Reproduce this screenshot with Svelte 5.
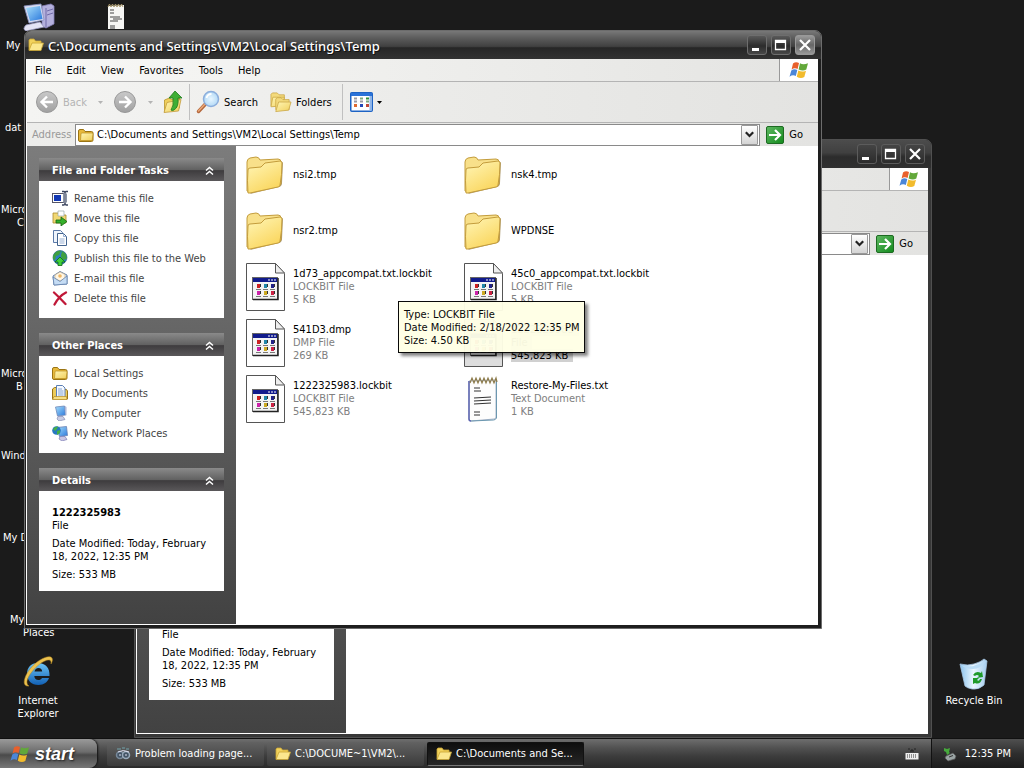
<script lang="ts">
  type Entry = {
    name: string;
    kind: 'folder' | 'app' | 'text';
    type?: string;
    size?: string;
    selected?: boolean;
  };

  const PATH = 'C:\\Documents and Settings\\VM2\\Local Settings\\Temp';

  const MENUS = ['File', 'Edit', 'View', 'Favorites', 'Tools', 'Help'];

  const TASKS = [
    { icon: 'rename', label: 'Rename this file' },
    { icon: 'move', label: 'Move this file' },
    { icon: 'copy', label: 'Copy this file' },
    { icon: 'publish', label: 'Publish this file to the Web' },
    { icon: 'mail', label: 'E-mail this file' },
    { icon: 'delete', label: 'Delete this file' },
  ];

  const PLACES = [
    { icon: 'folder', label: 'Local Settings' },
    { icon: 'documents', label: 'My Documents' },
    { icon: 'computer', label: 'My Computer' },
    { icon: 'network', label: 'My Network Places' },
  ];

  const FILES: Entry[] = [
    { name: 'nsi2.tmp', kind: 'folder' },
    { name: 'nsk4.tmp', kind: 'folder' },
    { name: 'nsr2.tmp', kind: 'folder' },
    { name: 'WPDNSE', kind: 'folder' },
    { name: '1d73_appcompat.txt.lockbit', kind: 'app', type: 'LOCKBIT File', size: '5 KB' },
    { name: '45c0_appcompat.txt.lockbit', kind: 'app', type: 'LOCKBIT File', size: '5 KB' },
    { name: '541D3.dmp', kind: 'app', type: 'DMP File', size: '269 KB' },
    { name: '1222325983', kind: 'app', type: 'File', size: '545,823 KB', selected: true },
    { name: '1222325983.lockbit', kind: 'app', type: 'LOCKBIT File', size: '545,823 KB' },
    { name: 'Restore-My-Files.txt', kind: 'text', type: 'Text Document', size: '1 KB' },
  ];

  // labels that stick out from behind the windows
  const LABELS = [
    { x: 6, y: 39, text: 'My' },
    { x: 5, y: 121, text: 'dat' },
    { x: 1, y: 203, text: 'Micro' },
    { x: 17, y: 216, text: 'C' },
    { x: 1, y: 367, text: 'Micro' },
    { x: 16, y: 380, text: 'B' },
    { x: 1, y: 449, text: 'Wind' },
    { x: 3, y: 531, text: 'My D' },
    { x: 10, y: 613, text: 'My' },
    { x: 23, y: 626, text: 'Places' },
  ];

  const DOTS = ['#c22', '#28a', '#228', '#c2a', '#ca2', '#c24'];
</script>

{#snippet flag(size: number)}
  <svg width={size} height={size} viewBox="0 0 20 20" aria-hidden="true">
    <path d="M4 3.500c2-1.800 4-1.600 6-.6L8.600 9c-2-1-4-1-6 .5z" fill="#e8602c" />
    <path d="M11 3.300c2 1.200 4.500 1.500 8 0L17.300 9.600c-2.500 1.400-5 1.200-7.700-.2z" fill="#62a83a" />
    <path d="M2.300 10.600c2-1.600 4-1.500 6-.5L6.800 16c-2-1-4-.9-6.300.7z" fill="#4b86d8" />
    <path d="M9.300 10.500c2.500 1.400 5 1.500 7.700.2L15.300 17c-2.500 1.400-5 1.100-7.500-.3z" fill="#f2bb2c" />
  </svg>
{/snippet}

{#snippet smallFolder()}
  <svg width="16" height="16" viewBox="0 0 16 16" aria-hidden="true">
    <path d="M.5 13V4q0-1.500 1.500-1.500h3.500l1.500 2h6.500q1.500 0 1.500 1.500v7q0 1.500-1.500 1.500H2Q.5 14.500.5 13z" fill="#e7b93c" stroke="#9a7414" />
    <path d="M2.500 13.500l.5-6.500q0-1 1-1h10q1 0 1 1l-.8 6.500z" fill="url(#gold)" stroke="#b78d20" stroke-width=".7" />
  </svg>
{/snippet}

{#snippet openFolder()}
  <svg width="16" height="16" viewBox="0 0 16 16" aria-hidden="true">
    <path d="M1 13V3l1-1h4l1.500 2H13v3" fill="#f2d25c" stroke="#c9a434" stroke-width=".8" />
    <path d="M1 13.500L4 6h11.500L13 13.500z" fill="#fbe78e" stroke="#c9a434" stroke-width=".8" />
  </svg>
{/snippet}

{#snippet notepad()}
  <svg width="39" height="48" viewBox="0 0 39 48" aria-hidden="true">
    <path d="M5 6l27-1v37q0 2-2 2L7 46q-2 0-2-2z" fill="#fdfdfd" stroke="#a9b4c8" />
    <path d="M5 6v38q0 2 2 2" fill="none" stroke="#5b63b0" stroke-width="1.500" />
    <path d="M32.500 6v37q-1 2-3 2L7 46" fill="none" stroke="#6c98b0" />
    <path d="M6 8l2-5 2 5 2-5 2 5 2-5 2 5 2-5 2 5 2-5 2 5 2-5 2 5 2-5 1 4" fill="none" stroke="#8c7a4a" stroke-width="1.200" />
    <path d="M10 13h6M10 16h7M10 23l17-1M10 26l17-1M10 29l17-1M10 37h6M10 40h6" stroke="#333" stroke-width="1.200" />
  </svg>
{/snippet}

{#snippet sideIcon(name: string)}
  {#if name === 'folder'}
    {@render smallFolder()}
  {:else}
    <svg width="16" height="16" viewBox="0 0 16 16" aria-hidden="true">
      {#if name === 'rename'}
        <rect x=".5" y="3.500" width="11" height="9" fill="#fff" stroke="#556" />
        <rect x="2" y="5" width="7" height="6" fill="#1238b4" />
        <path d="M10 1.500h2l1 1 1-1h2M13 2.500v11M10 15h2l1-1.500 1 1.500h2" fill="none" stroke="#3c4660" stroke-width="1.300" />
        <path d="M11.500 3.500v9M14.500 3.500v9" stroke="#8a94a6" />
      {:else if name === 'move'}
        <path d="M1 13V3h5l1 2h7v8z" fill="#f1d873" stroke="#a98b2c" stroke-width=".8" />
        <path d="M6 1h6v5H6z" fill="#fff" stroke="#9aa" stroke-width=".7" />
        <path d="M4 10h5V7l6 4.500L9 16v-3H4z" fill="#35b02c" stroke="#14640f" stroke-width=".8" />
      {:else if name === 'copy'}
        <path d="M1.500.500h7l2 2v10h-9z" fill="#eef4fc" stroke="#5a79a8" />
        <path d="M5.500 3.500h6l3 3v9h-9z" fill="#fff" stroke="#43648f" />
        <path d="M11.500 3.500v3h3M7.500 9h5M7.500 11h5M7.500 13h5" fill="none" stroke="#7e9cc8" stroke-width=".8" />
      {:else if name === 'publish'}
        <circle cx="8" cy="7.500" r="7" fill="#2e7fc0" stroke="#1c5a78" stroke-width=".6" />
        <path d="M1 6q3-6 8-5l-2 4-3 1-1 4-2-1zM10 1l4 3 .8 5-4 1-2-4z" fill="#3fa040" />
        <path d="M8 7l5 5h-3v3.500H6V12H3z" fill="#3fd03a" stroke="#0f6a14" stroke-width=".8" />
      {:else if name === 'mail'}
        <path d="M1 6l7-4.500L15 5v9L2 15z" fill="#d8e6f7" stroke="#6583ad" />
        <path d="M3 5l5-3 5 2.500v4L8 11 3 8.500z" fill="#fff6e4" stroke="#c2a77a" stroke-width=".6" />
        <circle cx="8" cy="6" r="1.800" fill="#f0b765" />
        <path d="M1 7l7 4.500L15 6v8L2 15z" fill="#c5dcf4" stroke="#6583ad" stroke-width=".8" />
      {:else if name === 'delete'}
        <path d="M2 2.500Q7 7 13.500 14M14 2.500Q7 6 2.500 14.500" fill="none" stroke="#c01838" stroke-width="2.300" stroke-linecap="round" />
      {:else if name === 'documents'}
        <path d="M.5 14V4l2-1.500h4l1 2h7l1 1.500V14z" fill="#eccb5a" stroke="#9a7414" />
        <path d="M4.500.500h6l2.500 2.500v9.500H4.500z" fill="#f5f9ff" stroke="#5b7fb4" />
        <path d="M6 4h4M6 6h5.500M6 8h5.500M6 10h5.500" stroke="#86a5d3" />
        <path d="M.5 14.500l1.500-3h12.500l.5 3z" fill="#f6de83" stroke="#b78d20" stroke-width=".7" />
      {:else if name === 'computer'}
        <path d="M3.500 2l9-1 1 9-8 1z" fill="url(#screen)" stroke="#7088b8" stroke-width=".8" />
        <path d="M13 1l1.500 1v8l-1 1" fill="#a9b4d8" />
        <path d="M6 11.500h5l2 3-6 1.500-2-2z" fill="#c9cde4" stroke="#868cb4" stroke-width=".7" />
      {:else}
        <path d="M5 2.500l9.500-1 1 9-8 1z" fill="url(#screen)" stroke="#6b82b4" stroke-width=".8" />
        <path d="M8 11.500h5l2 3-5 1.500-3-2z" fill="#c9c6e4" stroke="#7c7cb4" stroke-width=".7" />
        <circle cx="4.500" cy="5.500" r="4.300" fill="#2878c0" />
        <path d="M1 4q2-3 5-2.500L5 4 3 6zM5 6l3-1v3l-3 2z" fill="#46b044" />
      {/if}
    </svg>
  {/if}
{/snippet}

{#snippet fileIcon(entry: Entry)}
  {#if entry.kind === 'folder'}
    <svg width="39" height="40" viewBox="0 0 39 40" aria-hidden="true">
      <path d="M4 39l29-7q3-1 3-4l1-21-3 2z" fill="#8a7038" opacity=".7" />
      <path d="M1 36V7q0-3 3-4l6-1q3 0 4 3l18-1q3 0 3 3v22L4 37z" fill="#f8e08a" stroke="#c39c3c" />
      <path d="M2 38q-1-13 0-23 0-2 2-2l11-1 4-4 15-2q2 0 2 2 0 12-2 22 0 2-2 2L4 38z" fill="url(#bigfolder)" stroke="#c39c3c" />
    </svg>
  {:else if entry.kind === 'text'}
    {@render notepad()}
  {:else}
    <svg width="39" height="48" viewBox="0 0 39 48" aria-hidden="true">
      <path d="M.5.500h29l9 10v37H.5z" fill={entry.selected ? '#ddd' : '#fff'} stroke="#555" />
      <path d="M29.500.500v9.500h9z" fill="#eee" stroke="#555" />
      <rect x="6.500" y="14.500" width="25" height="22" fill="#f4f4f4" stroke="#666" />
      <path d="M7 15h24v4H7z" fill="#111b8c" />
      <path d="M22 17h2M25 17h2M28 17h2" stroke="#fff" />
      <path d="M7 36.500h25V15" fill="none" stroke="#222" stroke-width="1.500" />
      {#each DOTS as dot, i}
        <rect x={11 + (i % 3) * 7} y={21 + Math.floor(i / 3) * 7} width="3" height="4" fill={dot} />
        <path d="M{10 + (i % 3) * 7} {26.5 + Math.floor(i / 3) * 7}h5" stroke="#777" />
        <path d="M{14.5 + (i % 3) * 7} {21 + Math.floor(i / 3) * 7}v3" stroke="#333" />
      {/each}
    </svg>
  {/if}
{/snippet}

{#snippet chevrons()}
  <svg width="9" height="10" viewBox="0 0 9 10" aria-hidden="true">
    <path d="M1 4.500l3.500-3 3.500 3M1 8.500l3.500-3 3.500 3" fill="none" stroke="#fff" stroke-width="1.500" />
  </svg>
{/snippet}

{#snippet caret()}
  <svg width="5" height="3" viewBox="0 0 5 3" aria-hidden="true"><path d="M0 0h5L2.500 3z" fill="currentColor" /></svg>
{/snippet}

{#snippet explorer(id: string)}
  <section class="window {id}">
    <header class="titlebar">
      {@render openFolder()}
      <h2>{PATH}</h2>
      <button type="button" class="win-btn" aria-label="Minimize">
        <svg width="18" height="18" viewBox="0 0 18 18"><path d="M4 12h7v3H4z" fill="#fff" /></svg>
      </button>
      <button type="button" class="win-btn" aria-label="Maximize">
        <svg width="18" height="18" viewBox="0 0 18 18"><path d="M3.500 4.500h10v9h-10z" fill="none" stroke="#fff" stroke-width="1.300" /><path d="M3 4h11v3H3z" fill="#fff" /></svg>
      </button>
      <button type="button" class="win-btn close" aria-label="Close">
        <svg width="18" height="18" viewBox="0 0 18 18"><path d="M4 4l10 10M14 4L4 14" stroke="#fff" stroke-width="2.200" /></svg>
      </button>
    </header>

    <div class="client">
      <nav class="menubar">
        {#each MENUS as menu}
          <button type="button">{menu}</button>
        {/each}
        <span class="brand">{@render flag(20)}</span>
      </nav>

      <div class="toolbar">
        <button type="button" class="tool off" disabled>
          <svg width="24" height="24" viewBox="0 0 24 24" aria-hidden="true">
            <circle cx="12" cy="12" r="10.500" fill="url(#disc)" stroke="#999" />
            <path d="M18 12H7M12 6.500L6.500 12l5.500 5.500" fill="none" stroke="#fff" stroke-width="2.400" />
          </svg>
          Back
        </button>
        <span class="drop off">{@render caret()}</span>
        <button type="button" class="tool off" disabled aria-label="Forward">
          <svg width="24" height="24" viewBox="0 0 24 24" aria-hidden="true">
            <circle cx="12" cy="12" r="10.500" fill="url(#disc)" stroke="#999" />
            <path d="M6 12h11M12 6.500l5.500 5.500-5.500 5.500" fill="none" stroke="#fff" stroke-width="2.400" />
          </svg>
        </button>
        <span class="drop off">{@render caret()}</span>
        <button type="button" class="tool" aria-label="Up">
          <svg width="20" height="24" viewBox="0 0 20 24" aria-hidden="true">
            <path d="M1.500 22V10l5-2 2 1.500 8-1.500v10z" fill="#efcf5c" stroke="#b8942a" stroke-width=".8" />
            <path d="M1 22.500l3-10 14-3-2.500 11.500z" fill="url(#gold)" stroke="#c39c3c" stroke-width=".8" />
            <path d="M12 1l7 7h-4q1 9-4 12-2 1-3 0 3-4 2-12H6z" fill="#3fae35" stroke="#1d7a1a" stroke-width=".8" />
          </svg>
        </button>
        <span class="sep"></span>
        <button type="button" class="tool search">
          <svg width="24" height="24" viewBox="0 0 24 24" aria-hidden="true">
            <path d="M2.500 21.500l7-7.500" stroke="#b4663a" stroke-width="3.500" stroke-linecap="round" />
            <path d="M2.500 21l6-6.500" stroke="#eaa878" stroke-width="1.500" stroke-linecap="round" />
            <circle cx="15" cy="9" r="7.500" fill="url(#lens)" stroke="#8caedc" stroke-width="1.500" />
            <path d="M10.500 8q1-4 5-4" fill="none" stroke="#fff" stroke-width="1.800" />
          </svg>
          Search
        </button>
        <button type="button" class="tool folders">
          <svg width="22" height="22" viewBox="0 0 23 22" aria-hidden="true">
            <path d="M1 15V3l1.500-1.500h5l2 2H15V15z" fill="#f3da7c" stroke="#c9a644" stroke-width=".8" />
            <path d="M1 16L3 6h12l-1.500 9z" fill="url(#gold)" stroke="#c9a644" stroke-width=".8" />
            <path d="M6 19V8l1.500-1.500h4l2 2H20V19z" fill="#f3da7c" stroke="#c9a644" stroke-width=".8" />
            <path d="M6 21L9 11h13l-2.500 8.500z" fill="url(#gold)" stroke="#c9a644" stroke-width=".8" />
          </svg>
          Folders
        </button>
        <span class="sep"></span>
        <button type="button" class="tool views" aria-label="Views">
          <svg width="23" height="20" viewBox="0 0 23 20" aria-hidden="true">
            <rect x=".75" y=".75" width="21.500" height="18.500" rx="1" fill="#fff" stroke="#1d63c4" stroke-width="1.500" />
            <path d="M1 1h21v3H1z" fill="#2a72d8" />
            <path d="M20.500 4v15" stroke="#8fb6ea" stroke-width="2" />
            <path d="M4 6.500h3M4 9.500h3M10 9.500h3" stroke="#9a9aa4" stroke-width="2" />
            <path d="M10 6.500h3M16 9.500h3" stroke="#7aa880" stroke-width="2" />
            <path d="M16 6.500h3" stroke="#2f8f3a" stroke-width="2" />
            <path d="M4 13.500h3" stroke="#e06a30" stroke-width="3" />
            <path d="M10 13.500h3" stroke="#2448b8" stroke-width="3" />
            <path d="M16 13.500h3" stroke="#c04838" stroke-width="3" />
          </svg>
          {@render caret()}
        </button>
      </div>

      <div class="address">
        <label for="address-{id}">Address</label>
        <div class="combo">
          {@render smallFolder()}
          <input id="address-{id}" type="text" value={PATH} />
          <button type="button" aria-label="Show addresses">
            <svg width="9" height="7" viewBox="0 0 9 7" aria-hidden="true"><path d="M.8 1.200l3.700 3.800 3.700-3.800" fill="none" stroke="#222" stroke-width="2.200" /></svg>
          </button>
        </div>
        <button type="button" class="go">
          <svg width="18" height="18" viewBox="0 0 18 18" aria-hidden="true">
            <rect x=".5" y=".5" width="17" height="17" rx="1.500" fill="url(#go)" stroke="#1d6a22" />
            <path d="M3 9h10M9 4l5 5-5 5" fill="none" stroke="#fff" stroke-width="2.200" />
          </svg>
          Go
        </button>
      </div>

      <div class="body">
        <aside>
          <section class="panel covered">
            <h3>File and Folder Tasks {@render chevrons()}</h3>
            <ul>
              {#each TASKS as task (task.icon)}
                <li><a href="#{task.icon}">{@render sideIcon(task.icon)}{task.label}</a></li>
              {/each}
            </ul>
          </section>
          <section class="panel covered">
            <h3>Other Places {@render chevrons()}</h3>
            <ul>
              {#each PLACES as place (place.icon)}
                <li><a href="#{place.icon}">{@render sideIcon(place.icon)}{place.label}</a></li>
              {/each}
            </ul>
          </section>
          <section class="panel">
            <h3 class="covered">Details {@render chevrons()}</h3>
            <div class="details">
              <p><strong class="covered">1222325983</strong><br />File</p>
              <p>Date Modified: Today, February 18, 2022, 12:35 PM</p>
              <p>Size: 533 MB</p>
            </div>
          </section>
        </aside>

        {#if id === 'front'}
          <ul class="files">
            {#each FILES as entry (entry.name)}
              <li class:selected={entry.selected}>
                <span class="thumb">{@render fileIcon(entry)}</span>
                <div class="meta">
                  <span class="name">{entry.name}</span>
                  {#if entry.type}
                    <span>{entry.type}</span>
                    <span>{entry.size}</span>
                  {/if}
                </div>
              </li>
            {/each}
          </ul>
        {/if}
      </div>
    </div>

    {#if id === 'front'}
      <div class="tooltip" role="tooltip">
        Type: LOCKBIT File<br />
        Date Modified: 2/18/2022 12:35 PM<br />
        Size: 4.50 KB
      </div>
    {/if}
  </section>
{/snippet}

<svg class="defs" width="0" height="0" aria-hidden="true">
  <defs>
    <linearGradient id="gold" x1="0" y1="0" x2="1" y2="1"><stop offset="0" stop-color="#fff6b4" /><stop offset="1" stop-color="#f0cf5c" /></linearGradient>
    <linearGradient id="bigfolder" x1="0" y1="0" x2=".6" y2="1"><stop offset="0" stop-color="#fff6b8" /><stop offset="1" stop-color="#fad65e" /></linearGradient>
    <linearGradient id="screen" x1="0" y1="0" x2="1" y2="1"><stop offset="0" stop-color="#a8e0fc" /><stop offset="1" stop-color="#2a78dc" /></linearGradient>
    <linearGradient id="disc" x1="0" y1="0" x2="0" y2="1"><stop offset="0" stop-color="#c9c9c9" /><stop offset="1" stop-color="#a0a0a0" /></linearGradient>
    <radialGradient id="lens"><stop offset="0" stop-color="#e8f6ff" /><stop offset="1" stop-color="#b4daf6" /></radialGradient>
    <linearGradient id="go" x1="0" y1="0" x2="1" y2="1"><stop offset="0" stop-color="#5fb862" /><stop offset="1" stop-color="#128a1c" /></linearGradient>
    <linearGradient id="bin" x1="0" y1="0" x2="1" y2="0"><stop offset="0" stop-color="#8cc4ee" /><stop offset=".5" stop-color="#eaf6fe" /><stop offset="1" stop-color="#a4cdf0" /></linearGradient>
    <linearGradient id="ie" x1="0" y1="0" x2="0" y2="1"><stop offset="0" stop-color="#6cc4f6" /><stop offset="1" stop-color="#1260b4" /></linearGradient>
  </defs>
</svg>

<div class="screen">
  <main class="desktop">
    <svg class="shortcut pc" width="32" height="28" viewBox="0 0 32 28" aria-hidden="true">
      <path d="M19 3l9-2 3 2v18l-8 4-4-2z" fill="#b4b0dc" stroke="#8680b8" stroke-width=".8" />
      <path d="M23 5v19M24 8l6-2M24 12l6-2" stroke="#706aa8" />
      <path d="M1 3l17-2 3 16-15 3z" fill="#d8dcf0" stroke="#8890c0" stroke-width=".8" />
      <path d="M3 5l14-2 2.500 13L7 18z" fill="url(#screen)" />
      <path d="M3 22l14-3 4 5-18 4q-4-2 0-6z" fill="#e4e4f4" stroke="#9a9ac0" stroke-width=".8" />
    </svg>
    <svg class="shortcut note" width="18" height="27" viewBox="0 0 18 27" aria-hidden="true">
      <path d="M1 3l16-1v24H1z" fill="#f6f6f4" />
      <path d="M1 4l1.500-3L4 4l1.500-3L7 4l1.500-3L10 4l1.500-3L13 4l1.500-3L16 4" fill="none" stroke="#a8976a" />
      <path d="M3 7h4M3 10h4M3 14h10M6 16h9M3 18h8M3 23h5M3 25h5" stroke="#444" />
    </svg>

    {#each LABELS as label (label.y)}
      <span class="stub" style="left: {label.x}px; top: {label.y}px">{label.text}</span>
    {/each}

    <a class="launcher ie" href="#internet-explorer">
      <svg width="36" height="34" viewBox="0 0 34 34" aria-hidden="true">
        <path d="M17 7c-7 0-11 4.500-11 11s4.500 11 11.500 11c5.500 0 9-3 10.500-7h-7c-1 1.500-2 2-3.500 2-2.500 0-4-1.500-4.200-4H28.500C29 12 24.500 7 17 7zm-3.500 8.500c.5-2.200 1.800-3.500 4-3.500 2.300 0 3.500 1.400 3.700 3.500z" fill="url(#ie)" />
        <path d="M8 30c-7 1-6-8 1-17C16 4 28-2 31 2c1 2 0 4-1 6 .5-3-.5-4.500-3-4C19 5 5 20 6 27c.2 1.500 1 2.500 2 3z" fill="#ecc250" stroke="#b88a20" stroke-width=".5" />
      </svg>
      <span>Internet</span>
      <span>Explorer</span>
    </a>
    <a class="launcher bin" href="#recycle-bin">
      <svg width="30" height="32" viewBox="0 0 30 32" aria-hidden="true">
        <path d="M1 6q8 2 14 0 7-2 10-5l3 2-3 24q-5 5-12 4-5-1-7-3z" fill="url(#bin)" stroke="#a8c8e4" stroke-width=".8" />
        <path d="M2 7q9 3 15 0 7-2 10-4-5 8-13 8-8 0-12-4z" fill="#b9dcf6" />
        <path d="M14 17q3-5 8-2l1-2 1 6-6 1 2-2q-2-2-4 0zM23 21q-2 6-7 4l-2 1v-6l6 0-2 2q2 2 3-1z" fill="#1f9a2a" />
      </svg>
      <span>Recycle Bin</span>
    </a>

    {@render explorer('back')}
    {@render explorer('front')}
  </main>

  <footer class="taskbar">
    <button type="button" class="start">{@render flag(20)}start</button>
    <div class="tasks">
      <button type="button">
        <svg width="16" height="16" viewBox="0 0 16 16" aria-hidden="true">
          <path d="M2 3h4M7 2h3M11 3h3" stroke="#6a8a90" stroke-width="1.500" />
          <circle cx="5" cy="9" r="3.500" fill="#456" stroke="#789" stroke-width="1.500" />
          <circle cx="11" cy="9" r="3.500" fill="#456" stroke="#9ab" stroke-width="1.500" />
          <path d="M3 6q5-3 11 0M4 9h2M10 9h2" fill="none" stroke="#dde" />
        </svg>
        <span>Problem loading page...</span>
      </button>
      <button type="button">{@render openFolder()}<span>C:\DOCUME~1\VM2\...</span></button>
      <button type="button" class="active">{@render openFolder()}<span>C:\Documents and Se...</span></button>
    </div>
    <svg class="keyboard" width="14" height="12" viewBox="0 0 14 12" aria-hidden="true">
      <path d="M3 1h2M6 2h2M9 1h2M5 3h4" stroke="#222" />
      <rect x=".5" y="5" width="13" height="6.500" fill="#eee" />
      <path d="M2 7h10M2 9h10" stroke="#333" stroke-dasharray="1 1" />
    </svg>
    <div class="tray">
      <svg width="16" height="16" viewBox="0 0 16 16" aria-hidden="true">
        <path d="M4 10l7-3 3 3-1 3-7 2-3-3z" fill="#9aa4a4" stroke="#555" stroke-width=".7" />
        <path d="M7 11l4-1.500" stroke="#333" />
        <path d="M2 2l3 1 3-1-1 4 1 1-3 2-1-3-2-1z" fill="#46a83c" />
      </svg>
      <time>12:35 PM</time>
    </div>
  </footer>
</div>

<style>
  :global(body) {
    margin: 0;
    background: #1b1b1b;
  }
  .defs {
    position: absolute;
  }
  .screen {
    display: flex;
    flex-direction: column;
    height: 100vh;
    overflow: hidden;
    font-family: 'DejaVu Sans Condensed', 'DejaVu Sans', sans-serif;
    font-size: 11px;
    line-height: 13px;
    color: #000;
  }
  button,
  input {
    font: inherit;
    color: inherit;
    border: 0;
    padding: 0;
    background: none;
  }
  ul {
    list-style: none;
    margin: 0;
    padding: 0;
  }
  svg {
    flex-shrink: 0;
    display: block;
  }

  /* desktop */
  .desktop {
    position: relative;
    flex: 1;
    min-height: 0;
    background: #1b1b1b;
  }
  .shortcut,
  .stub,
  .launcher {
    position: absolute;
    color: #fff;
  }
  .pc {
    left: 23px;
    top: 3px;
  }
  .note {
    left: 107px;
    top: 3px;
  }
  .stub {
    white-space: nowrap;
  }
  .launcher {
    display: flex;
    flex-direction: column;
    align-items: center;
    width: 76px;
    text-decoration: none;
  }
  .launcher svg {
    margin-bottom: 4px;
  }
  .ie {
    left: 0;
    bottom: 18px;
  }
  .bin {
    right: 12px;
    bottom: 31px;
  }

  /* explorer window */
  .window {
    position: absolute;
    display: flex;
    flex-direction: column;
    box-sizing: border-box;
    border: 1px solid #6c6c6c;
    border-radius: 7px 7px 0 0;
    background: #1e1e1e;
    padding: 0 3px 3px 1px;
  }
  .window.front {
    inset: 30px 202px 109px 24px;
  }
  .window.back {
    inset: 139px 92px 0 134px;
    border-color: #505050;
    background: #383838;
  }
  .titlebar {
    display: flex;
    align-items: center;
    gap: 4px;
    height: 28px;
    margin: 0 -3px 0 -1px;
    padding: 0 6px 0 3px;
    border-radius: 6px 6px 0 0;
    background: linear-gradient(#787878, #5c5c5c 25%, #404040 55%, #262626 60%, #323232);
    color: #fff;
  }
  .back .titlebar {
    background: linear-gradient(#4c4c4c, #404040 45%, #2c2c2c 60%, #303030);
  }
  .titlebar h2 {
    flex: 1;
    margin: 0;
    padding-top: 2px;
    font: 500 13px/18px 'Noto Sans', 'Open Sans', sans-serif;
    white-space: nowrap;
    overflow: hidden;
    text-shadow: 1px 1px #111;
  }
  .win-btn {
    box-sizing: border-box;
    width: 20px;
    height: 20px;
    border: 1px solid #6e6e6e;
    border-radius: 3px;
    background: linear-gradient(#5a5a5a, #2c2c2c 55%, #484848);
  }
  .win-btn.close {
    border-color: #999;
    background: linear-gradient(#999, #666 50%, #999);
  }
  .back .win-btn {
    border-color: #5c5c5c;
    background: linear-gradient(#444, #2c2c2c);
  }
  .client {
    flex: 1;
    min-height: 0;
    display: flex;
    flex-direction: column;
    border: solid #fff;
    border-width: 0 0 1px 1px;
    background: #fff;
  }
  /* parts of the back window that lie under the front one */
  .back .covered,
  .back h2,
  .back label,
  .back input,
  .back .menubar button,
  .back .toolbar button {
    visibility: hidden;
  }
  .menubar {
    display: flex;
    align-items: center;
    gap: 15px;
    height: 22px;
    padding-left: 8px;
    border-bottom: 1px solid #b4b4b4;
    background: linear-gradient(90deg, #f8f8f6, #e4e4e2);
  }
  .brand {
    display: grid;
    place-items: center;
    align-self: stretch;
    width: 38px;
    margin-left: auto;
    border-left: 1px solid #999;
    background: #fff;
  }
  .toolbar {
    display: flex;
    align-items: center;
    height: 40px;
    padding-left: 8px;
    border-bottom: 1px solid #b4b4b4;
    background: linear-gradient(90deg, #f4f4f2, #e3e3e1);
  }
  .tool {
    display: flex;
    align-items: center;
    gap: 4px;
  }
  .off {
    color: #b4b4b4;
  }
  .drop {
    width: 26px;
    display: grid;
    place-items: center;
  }
  .sep {
    width: 1px;
    align-self: stretch;
    margin: 2px 6px;
    background: #c0c0c0;
  }
  .search {
    margin-right: 12px;
  }
  .folders {
    margin-right: 4px;
  }
  .views {
    margin-left: 1px;
  }
  .address {
    display: flex;
    align-items: center;
    height: 23px;
    padding: 0 15px 0 5px;
    background: linear-gradient(90deg, #ededeb, #e3e3e1);
  }
  .address label {
    width: 43px;
    color: #999;
  }
  .combo {
    flex: 1;
    display: flex;
    align-items: center;
    box-sizing: border-box;
    height: 22px;
    padding: 0 1px 0 2px;
    border: 1px solid #8a8a8a;
    background: #fff;
  }
  .combo input {
    flex: 1;
    min-width: 0;
    margin-left: 3px;
  }
  .combo button {
    display: grid;
    place-items: center;
    box-sizing: border-box;
    width: 17px;
    height: 20px;
    border: 1px solid #999;
    border-radius: 1px;
    background: linear-gradient(#fff, #d4d4d4);
  }
  .go {
    display: flex;
    align-items: center;
    gap: 5px;
    margin-left: 6px;
  }
  .body {
    flex: 1;
    min-height: 0;
    display: flex;
    overflow: hidden;
  }

  /* task pane */
  aside {
    flex: none;
    display: flex;
    flex-direction: column;
    gap: 15px;
    box-sizing: border-box;
    width: 209px;
    padding: 12px;
    overflow: hidden;
    background: linear-gradient(#7c7c7c, #424242);
  }
  .panel h3 {
    display: flex;
    align-items: center;
    justify-content: space-between;
    box-sizing: border-box;
    height: 23px;
    margin: 0;
    padding: 2px 10px 0 13px;
    font-size: 11px;
    font-weight: bold;
    color: #fff;
    background: linear-gradient(#8a8a8a, #626262 50%, #3e3c3e 55%, #5a585a);
  }
  .panel ul {
    padding: 7px 13px 10px;
    background: #fff;
  }
  .panel a {
    display: flex;
    align-items: center;
    gap: 6px;
    height: 20px;
    color: #444;
    text-decoration: none;
    white-space: nowrap;
  }
  .details {
    display: flex;
    flex-direction: column;
    gap: 5px;
    padding: 15px 13px 10px;
    background: #fff;
  }
  .details p {
    margin: 0;
  }

  /* file tiles */
  .files {
    flex: 1;
    display: grid;
    grid-template-columns: repeat(auto-fill, 218px);
    grid-auto-rows: 56px;
    max-width: 460px;
    padding: 1px 0 0 10px;
    background: #fff;
  }
  .files li {
    display: flex;
    align-items: center;
    gap: 8px;
  }
  .thumb {
    width: 39px;
  }
  .meta {
    display: flex;
    flex-direction: column;
    align-items: flex-start;
    color: #808080;
    padding-bottom: 2px;
  }
  .name {
    color: #000;
  }
  .selected .meta span {
    padding-right: 5px;
    background: #d0d0d0;
    color: #000;
  }
  .tooltip {
    position: absolute;
    left: 373px;
    top: 270px;
    padding: 6px 4px 5px 5px;
    border: 1px solid #000;
    background: #ffffe6;
    box-shadow: 3px 3px 3px rgba(0, 0, 0, 0.5);
    opacity: 0.96;
    white-space: nowrap;
  }

  /* taskbar */
  .taskbar {
    display: flex;
    align-items: stretch;
    height: 29px;
    border-top: 1px solid #111;
    background: linear-gradient(#6e6e6e, #525252 30%, #3c3c3c 60%, #2a2a2a);
    color: #fff;
  }
  .start {
    display: flex;
    align-items: center;
    gap: 5px;
    width: 97px;
    padding-left: 10px;
    border-radius: 0 8px 8px 0;
    background: linear-gradient(#9a9a9a, #6c6c6c 45%, #4a4a4a 55%, #777);
    box-shadow: 1px 0 2px #111;
    font: italic bold 18px/20px 'Liberation Sans', Arial, sans-serif;
    text-shadow: 1px 1px 2px #222;
  }
  .tasks {
    flex: 1;
    display: flex;
    align-items: center;
    gap: 3px;
    margin-left: 10px;
  }
  .tasks button {
    display: flex;
    align-items: center;
    gap: 4px;
    box-sizing: border-box;
    width: 157px;
    height: 24px;
    padding: 0 8px;
    border-radius: 2px;
    background: linear-gradient(#626262, #3a3a3a);
    white-space: nowrap;
  }
  .tasks .active {
    border: 1px solid #111;
    border-bottom-color: #777;
    background: linear-gradient(#0e0e0e, #262626);
  }
  .keyboard {
    align-self: center;
    margin-right: 12px;
  }
  .tray {
    display: flex;
    align-items: center;
    gap: 7px;
    padding: 0 13px 0 10px;
    border-left: 1px solid #111;
    background: linear-gradient(#505050, #2e2e2e 50%, #1c1c1c);
  }
</style>
